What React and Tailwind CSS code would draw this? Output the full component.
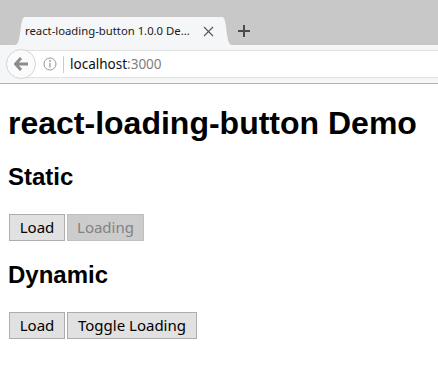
import React from 'react';

const ui = { fontFamily: '"Noto Sans", "Open Sans", sans-serif' };
const arial = { fontFamily: '"Liberation Sans", Arial, sans-serif' };

// Firefox-style tab edge
const Flare = ({ flip }) => (
  <svg width="10" height="28" viewBox="0 0 10 28" className="block shrink-0" style={flip ? { transform: 'scaleX(-1)' } : undefined}>
    <path d="M0 28 C7 28 4 0 10 0 L10 28 Z" fill="#f5f6f7" />
  </svg>
);

const Btn = ({ children, disabled, w }) => (
  <button
    disabled={disabled}
    className={`h-[27px] ${w} flex items-center justify-center border text-[15px] leading-none ${
      disabled ? 'bg-[#cccccc] border-[#bfbfbf] text-[#838383]' : 'bg-[#e1e1e1] border-[#adadad] text-black'
    }`}
    style={ui}
  >
    {children}
  </button>
);

export default function App() {
  return (
    <div className="w-[438px] h-[372px] bg-white overflow-hidden">
      {/* TAB STRIP */}
      <div className="h-[45px] bg-[#c8c8c8] flex items-end pl-[15px]">
        <div className="flex items-end h-[28px]">
          <Flare />
          <div className="h-[28px] w-[197px] bg-[#f5f6f7] flex items-center justify-between pr-[8px]" style={ui}>
            <span className="text-[11.3px] text-[#1a1a1a] whitespace-nowrap">react-loading-button 1.0.0 De...</span>
            <svg width="11" height="11" viewBox="0 0 11 11">
              <path d="M1 1 L10 10 M10 1 L1 10" stroke="#555" strokeWidth="1.1" fill="none" />
            </svg>
          </div>
          <Flare flip />
        </div>
        <div className="h-[28px] flex items-center pl-[6px]">
          <svg width="12" height="12" viewBox="0 0 12 12">
            <path d="M6 0 V12 M0 6 H12" stroke="#4a4a4a" strokeWidth="2" fill="none" />
          </svg>
        </div>
      </div>

      {/* NAV BAR */}
      <div className="h-[39px] bg-[#f5f6f7] border-b border-[#b4b4b4] flex items-center">
        <div className="relative z-10 ml-[6px] w-[30px] h-[30px] rounded-full bg-[#fbfbfb] border border-[#d4d4d4] flex items-center justify-center shrink-0">
          <svg width="15" height="14" viewBox="0 0 15 14">
            <path d="M7 1 L1.5 7 L7 13 M1.5 7 H14" stroke="#8c8c8c" strokeWidth="3" fill="none" strokeLinejoin="miter" />
          </svg>
        </div>
        <div className="-ml-[16px] flex-1 h-[28px] bg-white border-y border-[#e0e0e0] flex items-center pl-[23px]" style={ui}>
          <svg width="14" height="14" viewBox="0 0 14 14" className="shrink-0">
            <circle cx="7" cy="7" r="6" stroke="#999" strokeWidth="1" fill="none" />
            <path d="M7 6 V10.5" stroke="#999" strokeWidth="1.3" />
            <circle cx="7" cy="4" r="0.9" fill="#999" />
          </svg>
          <div className="w-px h-[17px] bg-[#cccccc] ml-[6px] mr-[6px]" />
          <span className="text-[13.5px] text-[#111]">
            localhost<span className="text-[#808080]">:3000</span>
          </span>
        </div>
      </div>

      {/* PAGE */}
      <div className="px-[8px] text-black" style={arial}>
        <h1 className="mt-[21px] text-[32px] leading-[37px] font-bold">react-loading-button Demo</h1>
        <h2 className="mt-[21px] text-[24px] leading-[28px] font-bold">Static</h2>
        <div className="mt-[23px] ml-px flex gap-[2px]">
          <Btn w="w-[56px]">Load</Btn>
          <Btn w="w-[77px]" disabled>Loading</Btn>
        </div>
        <h2 className="mt-[20px] text-[24px] leading-[28px] font-bold">Dynamic</h2>
        <div className="mt-[23px] ml-px flex gap-[2px]">
          <Btn w="w-[56px]">Load</Btn>
          <Btn w="w-[130px]">Toggle Loading</Btn>
        </div>
      </div>
    </div>
  );
}
